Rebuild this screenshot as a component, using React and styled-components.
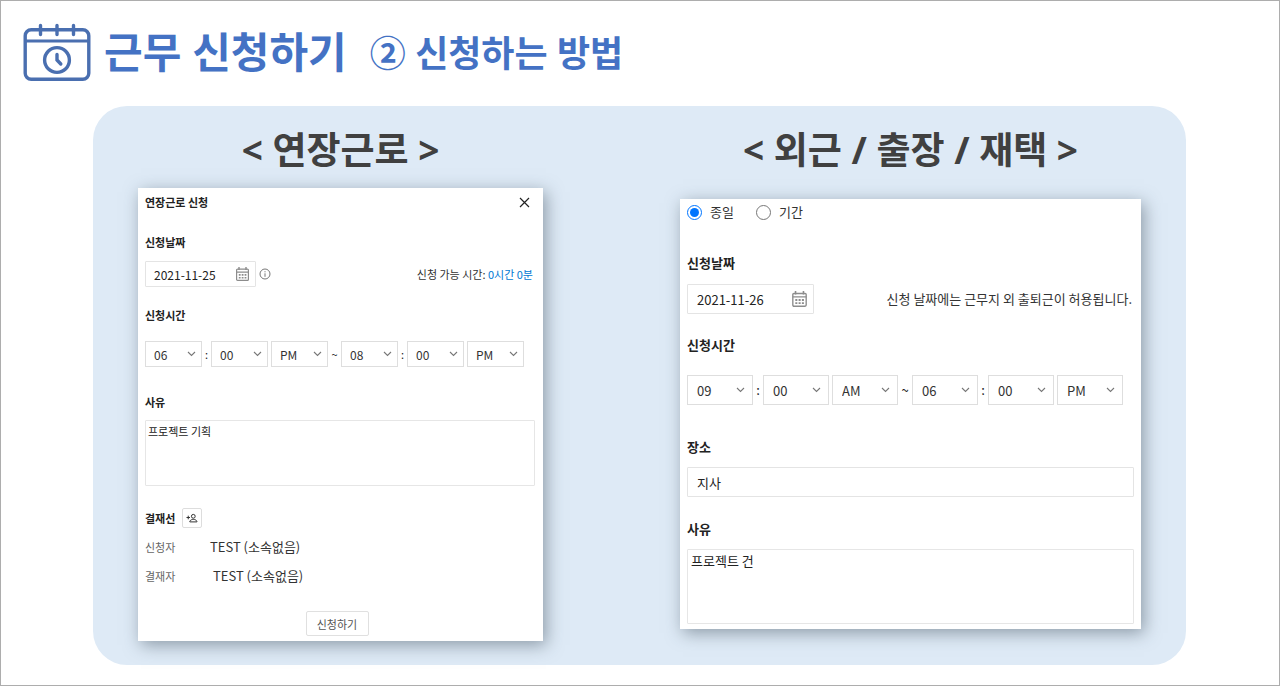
import React, { useState } from "react";
import styled, { createGlobalStyle, ThemeProvider } from "styled-components";

const GlobalStyle = createGlobalStyle`
  * {
    box-sizing: border-box;
  }
  body {
    margin: 0;
    background: #fff;
  }
  body, input, select, textarea, button {
    font-family: "Noto Sans CJK KR", "Noto Sans", sans-serif;
  }
  h1, h2 {
    font-family: "Noto Sans", "Noto Sans CJK KR", sans-serif;
  }
`;

// left card uses compact, right card uses roomy
const compact = {
  font: "11px",
  fieldFont: "12px",
  height: "26px",
  selectWidth: "57px",
  dateWidth: "111px",
  fieldPadding: "8px",
  iconRight: "6px",
  separator: "9px",
  tilde: "13px",
  gap: "3px",
  areaHeight: "66px",
  areaPadding: "2px",
};

const roomy = {
  font: "13px",
  fieldFont: "13px",
  height: "30px",
  selectWidth: "66px",
  dateWidth: "127px",
  fieldPadding: "9px",
  iconRight: "8px",
  separator: "10px",
  tilde: "14px",
  gap: "3px",
  areaHeight: "75px",
  areaPadding: "3px",
};

const Page = styled.main`
  min-height: 100vh;
  padding: 21px 93px 20px 92px;
  border: 1px solid #adadad;
`;

const Header = styled.header`
  display: flex;
  align-items: flex-start;
  height: 60px;
  margin-left: -70px;
  color: #4472c4;
  svg {
    flex: none;
    margin-right: 13px;
  }
`;

const Title = styled.h1`
  margin: 0 23px 0 0;
  font-size: 42px;
  line-height: 60px;
  font-weight: 700;
  white-space: nowrap;
`;

const SubTitle = styled.h2`
  margin: 0;
  font-size: 36px;
  line-height: 64px;
  font-weight: 700;
  white-space: nowrap;
`;

const Board = styled.div`
  display: flex;
  gap: 137px;
  align-items: flex-start;
  margin-top: 24px;
  padding: 14px 45px 24px;
  border-radius: 34px;
  background: #deeaf6;
`;

const Column = styled.section`
  flex: ${(props) => props.$grow} 1 0;
  min-width: 0;
`;

const Heading = styled.h2`
  margin: 0 0 ${(props) => props.$space};
  color: #404040;
  font-size: 37px;
  line-height: 60px;
  font-weight: 700;
  text-align: center;
  white-space: nowrap;
`;

const Card = styled.form`
  display: flex;
  flex-direction: column;
  padding: ${(props) => props.$padding};
  background: #fff;
  color: #222;
  font-size: ${(props) => props.theme.font};
  line-height: 16px;
  box-shadow: 3px 4px 16px rgba(60, 75, 90, 0.5);
`;

const Row = styled.div`
  display: flex;
  align-items: center;
  justify-content: ${(props) => (props.$spread ? "space-between" : "flex-start")};
`;

const CardTitle = styled.h3`
  margin: 0;
  font-size: inherit;
  font-weight: 700;
`;

const CloseButton = styled.button`
  display: flex;
  margin-right: 5px;
  padding: 0;
  border: 0;
  background: none;
  color: #222;
`;

const Field = styled.div`
  display: flex;
  flex-direction: column;
  align-items: stretch;
  gap: ${(props) => props.$gap};
  margin-top: ${(props) => props.$top};
`;

const Label = styled.label`
  font-weight: 700;
`;

const Legend = styled.span`
  font-weight: 700;
`;

const DateBox = styled.div`
  position: relative;
  width: ${(props) => props.theme.dateWidth};
  svg {
    position: absolute;
    top: 50%;
    right: 6px;
    transform: translateY(-50%);
    color: #8c8c8c;
    pointer-events: none;
  }
`;

const TextInput = styled.input`
  display: block;
  width: 100%;
  height: ${(props) => props.theme.height};
  padding: 0 ${(props) => props.theme.fieldPadding};
  border: 1px solid #e4e4e4;
  border-radius: 1px;
  background: #fff;
  color: #222;
  font-size: ${(props) => props.theme.fieldFont};
`;

const DateGroup = styled.div`
  display: flex;
  align-items: center;
  gap: 3px;
  color: #777;
`;

const Note = styled.span`
  margin-right: 2px;
  color: #333;
  b {
    color: #0078d4;
    font-weight: 400;
  }
`;

const Separator = styled.span`
  width: ${(props) => (props.$wide ? props.theme.tilde : props.theme.separator)};
  text-align: center;
`;

const SelectBox = styled.div`
  position: relative;
  width: ${(props) => props.theme.selectWidth};
  & + & {
    margin-left: ${(props) => props.theme.gap};
  }
  svg {
    position: absolute;
    top: 50%;
    right: ${(props) => props.theme.iconRight};
    transform: translateY(-50%);
    color: #777;
    pointer-events: none;
  }
`;

const Select = styled.select`
  display: block;
  width: 100%;
  height: ${(props) => props.theme.height};
  padding: 0 ${(props) => props.theme.fieldPadding};
  border: 1px solid #dedede;
  border-radius: 0;
  appearance: none;
  background: #fff;
  color: #333;
  font-size: ${(props) => props.theme.fieldFont};
`;

const TextArea = styled.textarea`
  display: block;
  width: 100%;
  height: ${(props) => props.theme.areaHeight};
  padding: ${(props) => props.theme.areaPadding};
  border: 1px solid #e6e6e6;
  border-radius: 1px;
  color: #222;
  font-size: ${(props) => props.theme.font};
  line-height: 16px;
  resize: none;
`;

const AddButton = styled.button`
  display: flex;
  align-items: center;
  justify-content: center;
  width: 20px;
  height: 20px;
  margin-left: 7px;
  padding: 0;
  border: 1px solid #ddd;
  border-radius: 2px;
  background: #fff;
  color: #333;
`;

const Approvers = styled.dl`
  display: grid;
  grid-template-columns: 65px 1fr;
  row-gap: 9px;
  margin: 9px 0 0;
  line-height: 20px;
  dt {
    color: #666;
  }
  dd {
    margin: 0;
    color: #333;
    font-size: 13px;
  }
  dd:last-child {
    padding-left: 3px;
  }
`;

const SubmitButton = styled.button`
  align-self: center;
  width: 63px;
  height: 25px;
  margin: 25px 6px 0 0;
  padding: 0;
  border: 1px solid #e0e0e0;
  border-radius: 2px;
  background: #fff;
  color: #555;
  font-size: 11px;
`;

const RadioLabel = styled.label`
  display: flex;
  align-items: center;
  gap: 8px;
  margin-right: 22px;
  line-height: 20px;
  color: #333;
  input {
    width: 15px;
    height: 15px;
    margin: 1px 0 0;
  }
`;

const LogoIcon = () => (
  <svg width="68" height="60" viewBox="0 0 68 60" fill="none" stroke="#4a6fb0" strokeWidth="3.4" strokeLinecap="round">
    <rect x="2.2" y="7.7" width="63.6" height="49.6" rx="6" />
    <path d="M2 19H66" strokeWidth="2.8" strokeLinecap="butt" />
    <path d="M17.5 3.5V12.5M34 3.5V12.5M50.5 3.5V12.5" />
    <circle cx="34" cy="38" r="12.4" />
    <path d="M34 32.5V38L37.8 42" />
  </svg>
);

const CalendarIcon = ({ size = 15 }) => (
  <svg width={size} height={size} viewBox="0 0 15 15" fill="none" stroke="currentColor">
    <rect x="1.6" y="2.6" width="11.8" height="11.3" rx="1" strokeWidth="1.2" />
    <path d="M1.5 5.6H13.5" strokeWidth="1.2" />
    <path d="M4 0.5V3.5M11 0.5V3.5" strokeWidth="1.4" />
    <path d="M3.8 8.4H11.4M3.8 11.2H11.4" strokeWidth="1.6" strokeDasharray="1.8 1.1" />
  </svg>
);

const ChevronIcon = () => (
  <svg width="9" height="6" viewBox="0 0 9 6" fill="none" stroke="currentColor" strokeWidth="1.1">
    <path d="M1 1L4.5 4.5L8 1" />
  </svg>
);

const InfoIcon = () => (
  <svg width="12" height="12" viewBox="0 0 12 12" fill="none" stroke="currentColor">
    <circle cx="6" cy="6" r="5" />
    <path d="M6 5.3V8.8M6 3.2V4.3" />
  </svg>
);

const CloseIcon = () => (
  <svg width="11" height="11" viewBox="0 0 11 11" stroke="currentColor" strokeWidth="1.2">
    <path d="M1 1L10 10M10 1L1 10" />
  </svg>
);

const AddPersonIcon = () => (
  <svg width="12" height="10" viewBox="0 0 12 10" fill="none" stroke="currentColor">
    <path d="M0.5 4.5H4M2.25 2.7V6.3" />
    <circle cx="7.3" cy="3.3" r="1.9" />
    <path d="M3.8 8.9V8.2C4.6 6.8 6 6.4 7.3 6.4C8.7 6.4 10.1 6.8 10.9 8.2V8.9Z" />
  </svg>
);

function TimeSelect({ label, value, options }) {
  return (
    <SelectBox>
      <Select aria-label={label} defaultValue={value}>
        {options.map((option) => (
          <option key={option}>{option}</option>
        ))}
      </Select>
      <ChevronIcon />
    </SelectBox>
  );
}

const hours = ["01", "02", "03", "04", "05", "06", "07", "08", "09", "10", "11", "12"];
const minutes = ["00", "10", "20", "30", "40", "50"];
const meridiems = ["AM", "PM"];

function TimeRange({ start, end }) {
  return (
    <Row>
      <TimeSelect label="시작 시" value={start[0]} options={hours} />
      <Separator>:</Separator>
      <TimeSelect label="시작 분" value={start[1]} options={minutes} />
      <TimeSelect label="시작 오전/오후" value={start[2]} options={meridiems} />
      <Separator $wide>~</Separator>
      <TimeSelect label="종료 시" value={end[0]} options={hours} />
      <Separator>:</Separator>
      <TimeSelect label="종료 분" value={end[1]} options={minutes} />
      <TimeSelect label="종료 오전/오후" value={end[2]} options={meridiems} />
    </Row>
  );
}

function OvertimeForm() {
  return (
    <ThemeProvider theme={compact}>
      <Card $padding="6px 8px 5px 7px">
        <Row $spread>
          <CardTitle>연장근로 신청</CardTitle>
          <CloseButton type="button" aria-label="닫기">
            <CloseIcon />
          </CloseButton>
        </Row>
        <Field $gap="11px" $top="24px">
          <Label htmlFor="overtime-date">신청날짜</Label>
          <Row $spread>
            <DateGroup>
              <DateBox>
                <TextInput id="overtime-date" defaultValue="2021-11-25" />
                <CalendarIcon />
              </DateBox>
              <InfoIcon />
            </DateGroup>
            <Note>
              신청 가능 시간: <b>0시간 0분</b>
            </Note>
          </Row>
        </Field>
        <Field $gap="18px" $top="20px">
          <Legend>신청시간</Legend>
          <TimeRange start={["06", "00", "PM"]} end={["08", "00", "PM"]} />
        </Field>
        <Field $gap="10px" $top="27px">
          <Label htmlFor="overtime-reason">사유</Label>
          <TextArea id="overtime-reason" defaultValue="프로젝트 기획" />
        </Field>
        <Field $top="22px">
          <Row>
            <Legend>결재선</Legend>
            <AddButton type="button" aria-label="결재자 추가">
              <AddPersonIcon />
            </AddButton>
          </Row>
        </Field>
        <Approvers>
          <dt>신청자</dt>
          <dd>TEST (소속없음)</dd>
          <dt>결재자</dt>
          <dd>TEST (소속없음)</dd>
        </Approvers>
        <SubmitButton type="button">신청하기</SubmitButton>
      </Card>
    </ThemeProvider>
  );
}

function OutsideForm() {
  const [range, setRange] = useState("day");

  return (
    <ThemeProvider theme={roomy}>
      <Card $padding="3px 7px 5px">
        <Row>
          <RadioLabel>
            <input type="radio" name="range" checked={range === "day"} onChange={() => setRange("day")} />
            종일
          </RadioLabel>
          <RadioLabel>
            <input type="radio" name="range" checked={range === "period"} onChange={() => setRange("period")} />
            기간
          </RadioLabel>
        </Row>
        <Field $gap="13px" $top="33px">
          <Label htmlFor="outside-date">신청날짜</Label>
          <Row $spread>
            <DateBox>
              <TextInput id="outside-date" defaultValue="2021-11-26" />
              <CalendarIcon size={17} />
            </DateBox>
            <Note>신청 날짜에는 근무지 외 출퇴근이 허용됩니다.</Note>
          </Row>
        </Field>
        <Field $gap="22px" $top="23px">
          <Legend>신청시간</Legend>
          <TimeRange start={["09", "00", "AM"]} end={["06", "00", "PM"]} />
        </Field>
        <Field $gap="12px" $top="34px">
          <Label htmlFor="outside-place">장소</Label>
          <TextInput id="outside-place" defaultValue="지사" />
        </Field>
        <Field $gap="12px" $top="24px">
          <Label htmlFor="outside-reason">사유</Label>
          <TextArea id="outside-reason" defaultValue="프로젝트 건" />
        </Field>
      </Card>
    </ThemeProvider>
  );
}

export default function App() {
  return (
    <Page>
      <GlobalStyle />
      <Header>
        <LogoIcon />
        <Title>근무 신청하기</Title>
        <SubTitle>② 신청하는 방법</SubTitle>
      </Header>
      <Board>
        <Column $grow={405}>
          <Heading $space="8px">&lt; 연장근로 &gt;</Heading>
          <OvertimeForm />
        </Column>
        <Column $grow={461}>
          <Heading $space="19px">&lt; 외근 / 출장 / 재택 &gt;</Heading>
          <OutsideForm />
        </Column>
      </Board>
    </Page>
  );
}
